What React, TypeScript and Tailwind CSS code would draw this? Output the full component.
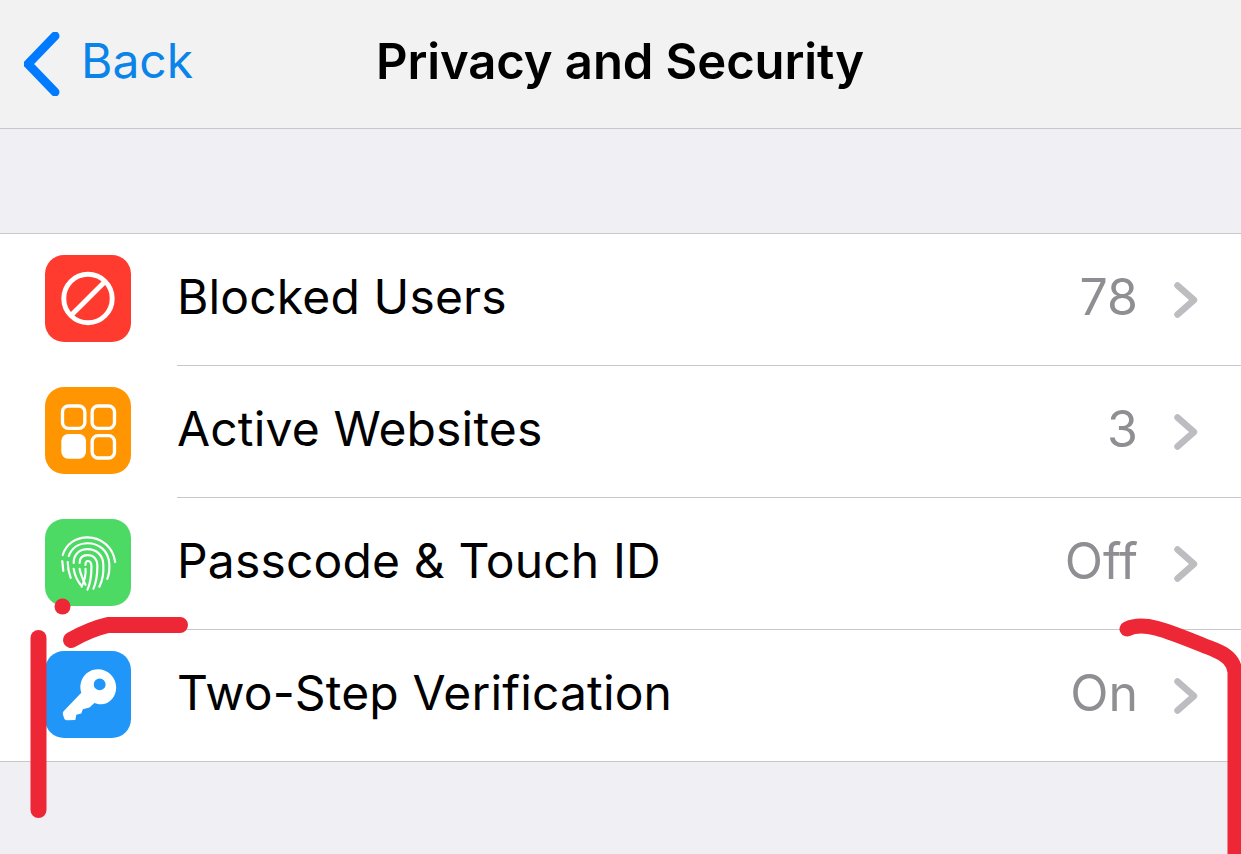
const font = { fontFamily: 'Inter, "Liberation Sans", sans-serif' };

function Blocked() {
  return (
    <svg viewBox="0 0 87 87" className="w-full h-full">
      <circle cx="43.5" cy="43.5" r="24.5" fill="none" stroke="#fff" strokeWidth="5" />
      <path d="M26.5 60.5 L60.5 26.5" stroke="#fff" strokeWidth="5" />
    </svg>
  );
}

function Apps() {
  return (
    <svg viewBox="0 0 87 87" className="w-full h-full" fill="none" stroke="#fff" strokeWidth="3.4">
      <rect x="17.7" y="18.7" width="22.6" height="22.6" rx="6" />
      <rect x="47.7" y="18.7" width="22.6" height="22.6" rx="6" />
      <rect x="16.5" y="47" width="25" height="25" rx="7" fill="#fff" stroke="none" />
      <rect x="47.7" y="48.7" width="22.6" height="22.6" rx="6" />
    </svg>
  );
}

function Finger() {
  return (
    <svg viewBox="0 0 87 87" className="w-full h-full" fill="none" stroke="#fff" strokeWidth="2.2" strokeLinecap="round">
      <path d="M18 36 C21 25 31 18 43 18 C57 18 69 28 71 43" />
      <path d="M17.5 42 L18.5 52" />
      <path d="M24 37 C27 29 34 24 43 24 C55 24 64 32 65 44 C65.5 50 65 55 63 60" />
      <path d="M23 43 C23 49 24 54 26 59" />
      <path d="M29 44 C29 35 35 30 43 30 C52 30 59 36 59 46 C59.5 54 58 62 55 68" />
      <path d="M29 50 C30 56 32 61 36 66" />
      <path d="M35 44 C35 39 38 36 43 36 C49 36 53 40 53 47 C53 55 52 63 49 70" />
      <path d="M35 50 C36 55 38 60 41 66" />
      <path d="M41 46 C40.5 43.5 42 42 43.5 42 C46 42 47 45 47 48 C47 56 46 64 43 71" />
      <path d="M41 50 C41.5 56 40 62 37 68" />
    </svg>
  );
}

function KeyIcon() {
  return (
    <svg viewBox="0 0 87 87" className="w-full h-full">
      <path
        fillRule="evenodd"
        fill="#fff"
        d="M36.7 41.7 L18.8 60.5 Q17.5 62 18.2 64 L19.5 68 Q20 69.5 22 69.5 L30.7 69.3 L31.7 64 L36.7 62.7 L38.3 58.3 L45 56.7 L50 52 C62 57 72 48 72 36.5 C72 26 63.5 18 53.5 18 C42 18 33 29 36.7 41.7 Z M55.3 27.3 A6 6 0 1 0 55.3 39.3 A6 6 0 1 0 55.3 27.3 Z"
      />
    </svg>
  );
}

function Row({
  icon,
  color,
  label,
  value,
  last,
}: {
  icon: React.ReactNode;
  color: string;
  label: string;
  value: string;
  last?: boolean;
}) {
  return (
    <div className="flex h-[132px] pl-[45px]">
      <div className="flex h-[129px] w-[132px] shrink-0 items-center">
        <div className={`h-[87px] w-[86px] rounded-[19px] overflow-hidden ${color}`}>{icon}</div>
      </div>
      <div className={`flex flex-1 items-center pr-[43px] ${last ? '' : 'border-b border-[#c8c7cc]'}`}>
        <span className="mb-[6px] flex-1 text-[48px] leading-none tracking-[0.15px] text-black">{label}</span>
        <span className="mb-[6px] text-[50px] leading-none text-[#8e8e93]">{value}</span>
        <svg viewBox="0 0 24 36" className="ml-[36px] h-[36px] w-[24px]" fill="none" stroke="#bdbdc1" strokeWidth="6.5" strokeLinecap="round" strokeLinejoin="round">
          <path d="M3.5 3.5 L20 18 L3.5 32.5" />
        </svg>
      </div>
    </div>
  );
}

export default function App() {
  return (
    <div className="relative h-[854px] w-[1241px] overflow-hidden bg-[#efeff4]" style={font}>
      <header className="relative flex h-[129px] items-center border-b border-[#c8c7cc] bg-[#f2f2f3] pl-[24px]">
        <svg viewBox="0 0 36 64" className="h-[64px] w-[36px] shrink-0" fill="none" stroke="#007aff" strokeWidth="9" strokeLinecap="round" strokeLinejoin="round">
          <path d="M31 4 L4 32 L31 60" />
        </svg>
        <span className="mb-[6px] ml-[21px] text-[48px] leading-none text-[#0a84e8]">Back</span>
        <h1 className="absolute left-0 right-[1px] top-[37px] text-center text-[49px] font-semibold leading-none tracking-[-0.1px] text-black">
          Privacy and Security
        </h1>
      </header>
      <div className="mt-[104px] border-y border-[#c8c7cc] bg-white">
        <Row icon={<Blocked />} color="bg-[#ff3b30]" label="Blocked Users" value="78" />
        <Row icon={<Apps />} color="bg-[#ff9500]" label="Active Websites" value="3" />
        <Row icon={<Finger />} color="bg-[#4cd964]" label="Passcode & Touch ID" value="Off" />
        <div className="-mb-[1px]">
          <Row icon={<KeyIcon />} color="bg-[#2196f9]" label="Two-Step Verification" value="On" last />
        </div>
      </div>
      <svg className="pointer-events-none absolute left-0 top-0 h-[854px] w-[1241px]" viewBox="0 0 1241 854" fill="none" stroke="#ee2737" strokeLinecap="round" strokeLinejoin="round">
        <circle cx="62.5" cy="606.5" r="8" fill="#ee2737" stroke="none" />
        <path d="M71 640 C85 632 95 628 108 625 L180 625" strokeWidth="16" />
        <path d="M38.5 638 L38.5 810" strokeWidth="16" />
        <path d="M1127 629 C1145 620 1170 632 1215 650 C1228 655 1234 662 1235 672 L1235 860" strokeWidth="15" />
      </svg>
    </div>
  );
}
